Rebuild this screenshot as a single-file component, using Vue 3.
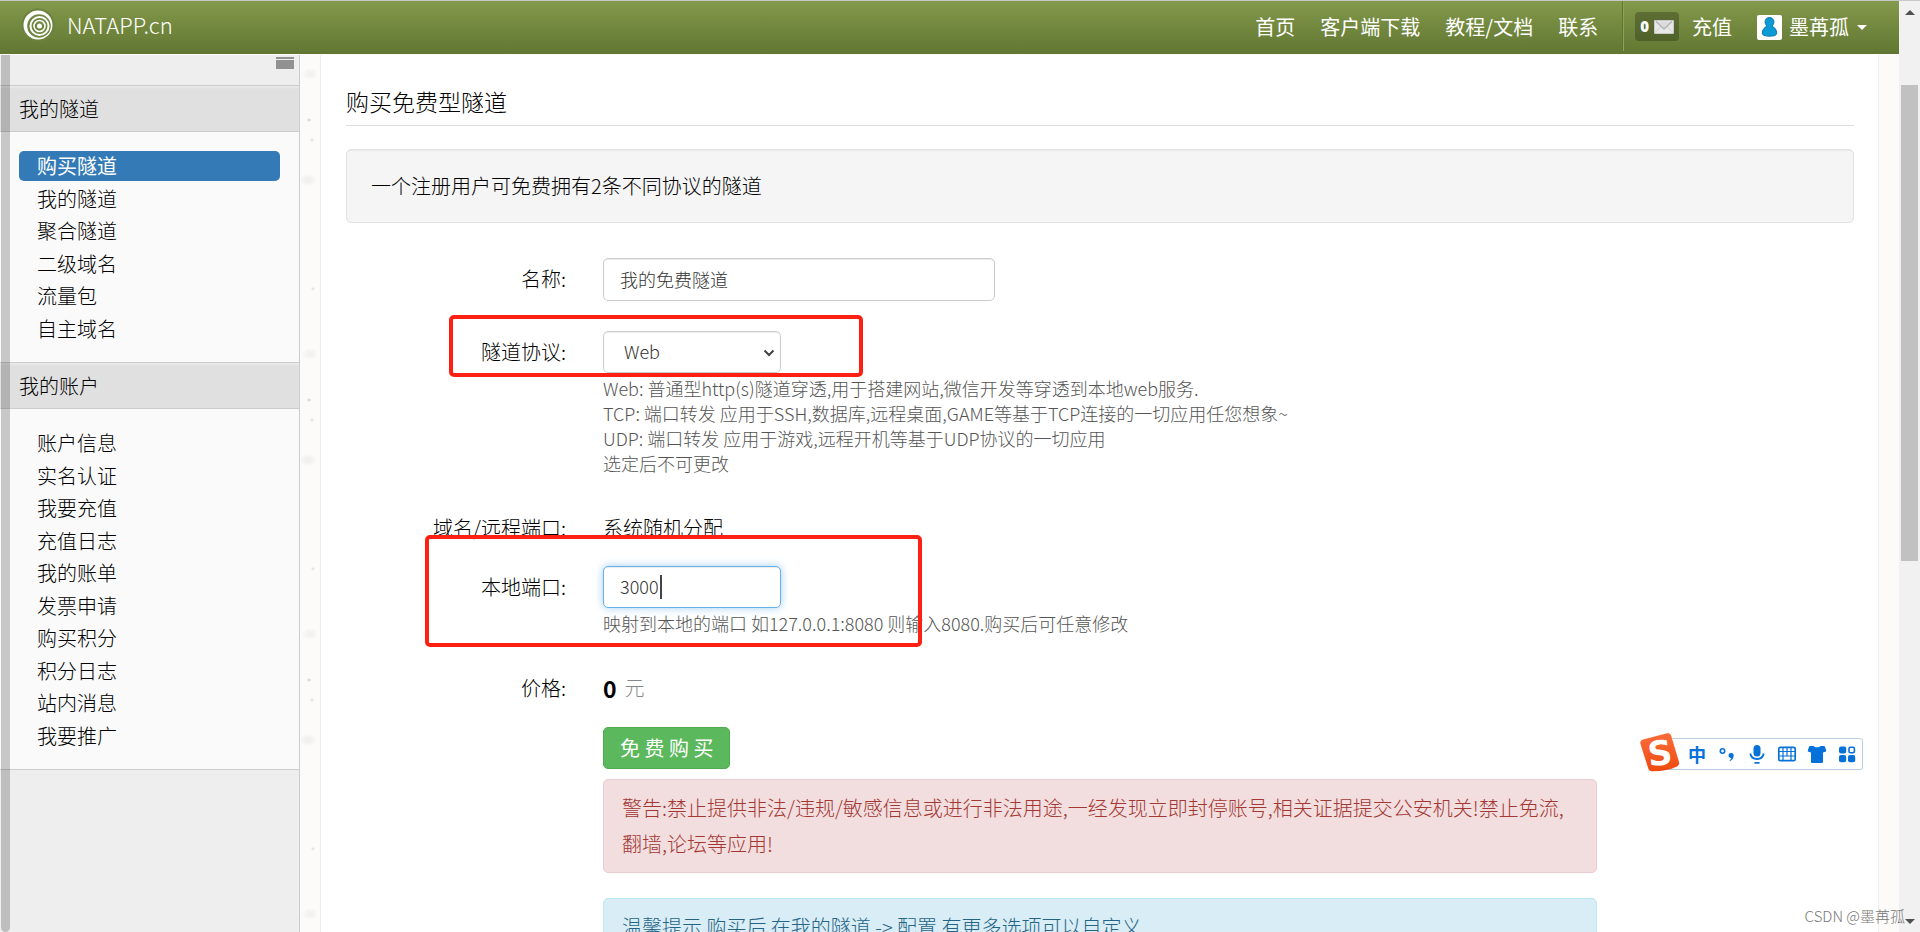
<script setup>
import { ref } from 'vue'

const navLinks = ['首页', '客户端下载', '教程/文档', '联系']
const groups = [
  { title: '我的隧道', items: ['购买隧道', '我的隧道', '聚合隧道', '二级域名', '流量包', '自主域名'] },
  {
    title: '我的账户',
    items: ['账户信息', '实名认证', '我要充值', '充值日志', '我的账单', '发票申请', '购买积分', '积分日志', '站内消息', '我要推广'],
  },
]
const active = '0-0'
const name = ref('我的免费隧道')
const protocol = ref('Web')
const port = ref('3000')
</script>

<template>
  <div class="window">
    <div class="page">
      <header class="topbar">
        <a class="brand" href="#">
          <svg width="34" height="34" viewBox="0 0 34 34" aria-hidden="true">
            <circle cx="17" cy="17" r="16.500" fill="#6c8340" />
            <circle cx="17" cy="17" r="14.500" fill="#fff" />
            <circle cx="18" cy="18" r="11.800" fill="#6f863f" />
            <circle cx="18.500" cy="18" r="9" fill="none" stroke="#fff" stroke-width="2" />
            <circle cx="18.500" cy="18" r="5.500" fill="none" stroke="#fff" stroke-width="1.600" />
            <circle cx="18.500" cy="18" r="2.500" fill="#fff" />
          </svg>
          <span>NATAPP.cn</span>
        </a>
        <nav class="nav">
          <a v-for="link in navLinks" :key="link" href="#">{{ link }}</a>
        </nav>
        <div class="account">
          <a class="mail" href="#" aria-label="站内消息">
            <b>0</b>
            <svg width="20" height="14" viewBox="0 0 20 14" aria-hidden="true">
              <rect width="20" height="14" rx="1" fill="#c9c9c9" />
              <rect x="1" y="1" width="18" height="12" fill="#e8e8e8" />
              <path d="M1 12.500 7.500 6M19 12.500 12.500 6" stroke="#cfcfcf" fill="none" />
              <path d="M2 1.500 10 9l8-7.500" stroke="#b5b5b5" stroke-width="1.400" fill="#dcdcdc" />
            </svg>
          </a>
          <a class="recharge" href="#">充值</a>
          <a class="user" href="#">
            <svg width="25" height="25" viewBox="0 0 25 25" aria-hidden="true">
              <rect width="25" height="25" rx="2" fill="#fff" />
              <path
                d="M12.500 2.500c2.600 0 4.400 1.900 4.400 4.500 0 1.800-.9 3.200-2 4.300 2.600.8 4.800 3.400 4.800 7 0 1.800-2.500 2.900-7.200 2.900s-7.200-1.100-7.200-2.900c0-3.600 2.200-6.200 4.800-7-1.100-1.100-2-2.500-2-4.300 0-2.600 1.800-4.500 4.400-4.500z"
                fill="#0c9bd6" stroke="#0a74a8" />
            </svg>
            <span>墨苒孤</span>
            <i class="caret"></i>
          </a>
        </div>
      </header>

      <div class="body">
        <aside class="sidebar">
          <div class="toggle-row">
            <button class="toggle" type="button" aria-label="折叠菜单"><i></i><i></i></button>
          </div>
          <section v-for="(group, g) in groups" :key="group.title">
            <h3>{{ group.title }}</h3>
            <ul>
              <li v-for="(item, n) in group.items" :key="item">
                <a href="#" :class="{ active: active === g + '-' + n }">{{ item }}</a>
              </li>
            </ul>
          </section>
          <div class="rail"></div>
        </aside>

        <main class="content">
          <h1>购买免费型隧道</h1>
          <div class="well">一个注册用户可免费拥有2条不同协议的隧道</div>

          <form class="form" @submit.prevent>
            <div class="row name-row">
              <label for="name">名称:</label>
              <div><input id="name" v-model="name" class="control wide" type="text" /></div>
            </div>

            <div class="row protocol-row">
              <label for="protocol">隧道协议:</label>
              <div>
                <div class="select-box">
                  <select id="protocol" v-model="protocol" class="control">
                    <option>Web</option>
                    <option>TCP</option>
                    <option>UDP</option>
                  </select>
                  <svg class="chevron" width="12" height="8" viewBox="0 0 12 8" aria-hidden="true">
                    <path d="M1.500 1.500 6 6l4.500-4.500" fill="none" stroke="#444" stroke-width="2" />
                  </svg>
                </div>
                <p class="help">
                  Web: 普通型http(s)隧道穿透,用于搭建网站,微信开发等穿透到本地web服务.<br />
                  TCP: 端口转发 应用于SSH,数据库,远程桌面,GAME等基于TCP连接的一切应用任您想象~<br />
                  UDP: 端口转发 应用于游戏,远程开机等基于UDP协议的一切应用<br />
                  选定后不可更改
                </p>
              </div>
              <div class="mark mark-protocol"></div>
            </div>

            <div class="row domain-row">
              <span class="label">域名/远程端口:</span>
              <div>系统随机分配</div>
            </div>

            <div class="row port-row">
              <label for="port">本地端口:</label>
              <div>
                <div class="port-box">
                  <input id="port" v-model="port" class="control focused" type="text" />
                  <i class="cursor"></i>
                </div>
                <p class="help">映射到本地的端口 如127.0.0.1:8080 则输入8080.购买后可任意修改</p>
              </div>
              <div class="mark mark-port"></div>
            </div>

            <div class="row price-row">
              <span class="label">价格:</span>
              <div class="price"><b>0</b> <span>元</span></div>
            </div>

            <div class="actions">
              <button class="buy" type="submit">免 费 购 买</button>
              <div class="alert danger">警告:禁止提供非法/违规/敏感信息或进行非法用途,一经发现立即封停账号,相关证据提交公安机关!禁止免流,翻墙,论坛等应用!</div>
              <div class="alert info">温馨提示 购买后 在我的隧道 -&gt; 配置 有更多选项可以自定义</div>
            </div>
          </form>
        </main>
      </div>
    </div>

    <div class="scrollbar">
      <i class="arrow up"></i>
      <div class="thumb"></div>
      <i class="arrow down"></i>
    </div>

    <div class="ime">
      <svg class="ime-logo" width="42" height="42" viewBox="0 0 42 42" aria-hidden="true">
        <defs>
          <linearGradient id="imeFill" x1="0" y1="0" x2="0" y2="1">
            <stop offset="0" stop-color="#fb6d3a" />
            <stop offset="1" stop-color="#ee4a10" />
          </linearGradient>
        </defs>
        <path d="M4 8.500 28 2.300q3-.7 4 2L40 31q.8 3-2 4.500Q28 40.500 13 40.300q-3 0-3.800-3L1.300 12.500Q.8 9.500 4 8.500z" fill="url(#imeFill)" />
        <text x="21" y="34" text-anchor="middle" transform="rotate(-6 21 22)">S</text>
      </svg>
      <button type="button" class="zh">中</button>
      <button type="button" aria-label="标点">
        <svg width="20" height="20" viewBox="0 0 20 20">
          <circle cx="5.500" cy="7" r="2.200" fill="none" stroke="#0671d8" stroke-width="1.600" />
          <path d="M14 9a2.500 2.500 0 0 1 2.600 2.700c0 2.400-1.400 4.400-3.600 5.300l-.5-.8c1-.6 1.700-1.300 1.800-2.200-1.600.1-2.800-1-2.800-2.500S12.500 9 14 9z" fill="#0671d8" />
        </svg>
      </button>
      <button type="button" aria-label="语音">
        <svg width="20" height="20" viewBox="0 0 20 20">
          <rect x="6.500" y="1" width="7" height="11.500" rx="3.500" fill="#0671d8" />
          <path d="M3.300 9.500c.6 3.800 3.200 5.500 6.700 5.500s6.100-1.700 6.700-5.500M7.500 18.800h5" fill="none" stroke="#0671d8" stroke-width="1.800" />
        </svg>
      </button>
      <button type="button" aria-label="键盘">
        <svg width="20" height="20" viewBox="0 0 20 20">
          <rect x="1.800" y="3.300" width="16.400" height="13.400" rx="1.500" fill="none" stroke="#0671d8" stroke-width="1.700" />
          <path d="M2 7.500h16M2 12h16M6 4v13M10 4v8M14 4v13" stroke="#0671d8" stroke-width="1.200" />
        </svg>
      </button>
      <button type="button" aria-label="皮肤">
        <svg width="20" height="20" viewBox="0 0 20 20">
          <path d="M6.500 2c1 1.800 6 1.800 7 0h3.300q.8 0 1.200.8l1.200 3.700q.2 1-.7 1.300L16 8.500V18q0 1-1 1H5q-1 0-1-1V8.500L1.500 7.800q-.9-.3-.7-1.300L2 2.800Q2.400 2 3.200 2z" fill="#0671d8" />
        </svg>
      </button>
      <button type="button" aria-label="工具">
        <svg width="20" height="20" viewBox="0 0 20 20">
          <g fill="#0671d8">
            <rect x="2" y="2.500" width="7.200" height="7" rx="2" />
            <rect x="2" y="11" width="7.200" height="7.200" rx="2" />
            <rect x="11" y="11" width="7.200" height="7.200" rx="2" />
          </g>
          <rect x="12" y="3.300" width="5.400" height="5.400" rx="1.500" fill="none" stroke="#0671d8" stroke-width="1.600" />
        </svg>
      </button>
    </div>

    <div class="watermark">CSDN @墨苒孤</div>
  </div>
</template>

<style>
html,
body {
  margin: 0;
  overflow: hidden;
}
</style>

<style scoped>
* {
  box-sizing: border-box;
}
.window {
  position: relative;
  display: flex;
  height: 100vh;
  overflow: hidden;
  font-family: "Noto Sans CJK SC", "Open Sans", sans-serif;
  font-weight: 300;
  font-size: 20px;
  line-height: 30px;
  color: #000;
  /* speckled paper */
  background-color: #fcfbfa;
  background-image:
    radial-gradient(circle at 9px 120px, #d9d9d7 0 1px, transparent 2px),
    radial-gradient(circle at 12px 140px, #e4e4e2 0 1px, transparent 2px),
    radial-gradient(ellipse at 8px 180px, #f1f0ee 0 3px, transparent 9px),
    radial-gradient(circle at 13px 9px, #e6e6e4 0 1px, transparent 2px),
    radial-gradient(ellipse at 10px 74px, #f3f2f0 0 3px, transparent 8px);
  background-size: 280px 280px;
  background-position: 300px 0;
}
a {
  color: inherit;
  text-decoration: none;
}
.page {
  flex: 1;
  min-width: 0;
  display: flex;
  flex-direction: column;
}
.topbar {
  flex: none;
  display: flex;
  align-items: stretch;
  height: 54px;
  border-top: 1px solid #c8c8c8;
  background: linear-gradient(#83994b, #617631);
  color: #fff;
  font-weight: 400;
}
.brand {
  display: flex;
  gap: 12px;
  padding: 7px 0 0 21px;
  margin-right: auto;
  font-size: 22px;
  font-weight: 300;
  line-height: 32px;
}
.nav {
  display: flex;
  gap: 25px;
  padding: 11px 24px 0 0;
}
.account {
  display: flex;
  align-items: flex-start;
  padding: 11px 32px 0 13px;
  position: relative;
}
.account::before {
  content: "";
  position: absolute;
  left: 0;
  top: 0;
  width: 2px;
  height: 50px;
  background: linear-gradient(90deg, #5f7530 50%, #8ba356 50%);
}
.mail {
  display: flex;
  align-items: center;
  gap: 5px;
  height: 29px;
  padding: 0 5px;
  border-radius: 4px;
  background: rgba(0, 0, 0, 0.24);
  font: 700 15px/29px "Open Sans", sans-serif;
}
.recharge {
  margin-left: 13px;
}
.user {
  display: flex;
  align-items: center;
  gap: 7px;
  margin-left: 25px;
}
.caret {
  margin-left: 1px;
  border: 5px solid transparent;
  border-top-color: #fff;
  border-bottom: 0;
}
.body {
  flex: 1;
  min-height: 0;
  display: flex;
  padding-top: 1px;
}
.sidebar {
  position: relative;
  flex: none;
  width: 300px;
  background: #eee;
  border-right: 1px solid #ccc;
  overflow: hidden;
}
.toggle-row {
  display: flex;
  justify-content: flex-end;
  height: 30px;
  padding: 2px 5px;
}
.toggle {
  display: flex;
  flex-direction: column;
  gap: 1px;
  width: 18px;
  padding: 0;
  border: 0;
  background: none;
}
.toggle i {
  height: 2px;
  background: #919191;
}
.toggle i + i {
  height: 9px;
}
.sidebar h3 {
  margin: 0;
  padding: 8px 19px 7px;
  border: solid #ccc;
  border-width: 1px 0;
  background: #e0e0e0;
  box-shadow: inset 0 2px 2px #e9e9e9;
  font-size: 20px;
  font-weight: 300;
  line-height: 30px;
}
.sidebar ul {
  list-style: none;
  margin: 0;
  padding: 19px 19px 16px;
  background: #fafafa;
}
.sidebar section:last-of-type {
  border-bottom: 1px solid #ccc;
}
.sidebar li {
  margin-bottom: 3px;
}
.sidebar li:nth-child(even) {
  margin-bottom: 2px;
}
.sidebar li a {
  display: block;
  padding: 0 18px;
  border-radius: 5px;
}
.sidebar li a.active {
  color: #fff;
  font-weight: 400;
  background: #337ab7;
}
.rail {
  position: absolute;
  inset: 0 auto 0 1px;
  width: 9px;
  border-radius: 0 0 5px 5px;
  background: rgba(0, 0, 0, 0.2);
}
.content {
  flex: 1;
  min-width: 0;
  margin: 0 20px;
  padding: 30px 24px 0 25px;
  border: solid #eee;
  border-width: 0 1px;
  background: #fff;
}
h1 {
  margin: 0 0 23px;
  padding-bottom: 8px;
  border-bottom: 1px solid #ddd;
  font-size: 23px;
  font-weight: 300;
  line-height: 32px;
}
.well {
  padding: 21px 24px;
  border: 1px solid #e3e3e3;
  border-radius: 5px;
  background: #f5f5f5;
  box-shadow: inset 0 1px 1px rgba(0, 0, 0, 0.05);
}
.form {
  display: flex;
  flex-direction: column;
  padding-top: 35px;
}
.row {
  position: relative;
  display: grid;
  grid-template-columns: 220px 1fr;
  column-gap: 37px;
}
.row > label,
.row > .label {
  text-align: right;
}
.row > label {
  padding-top: 6px;
}
.name-row {
  margin-bottom: 30px;
}
.protocol-row {
  margin-bottom: 37px;
}
.domain-row {
  margin-bottom: 23px;
}
.port-row {
  margin-bottom: 34px;
}
.price-row {
  margin-bottom: 21px;
  line-height: 36px;
}
.control {
  display: block;
  width: 100%;
  height: 42px;
  margin: 0;
  padding: 0 16px 2px;
  border: 1px solid #ccc;
  border-radius: 5px;
  background: #fff;
  box-shadow: inset 0 1px 1px rgba(0, 0, 0, 0.08);
  font: inherit;
  font-size: 18px;
  line-height: 30px;
  color: #333;
  outline: none;
}
.wide {
  width: 392px;
  height: 43px;
}
.select-box,
.port-box {
  position: relative;
  width: 178px;
}
select.control {
  appearance: none;
  padding-left: 20px;
}
.chevron {
  position: absolute;
  right: 6px;
  top: 18px;
  pointer-events: none;
}
.focused {
  border-color: #66afe9;
  box-shadow: inset 0 1px 1px rgba(0, 0, 0, 0.08), 0 0 8px rgba(102, 175, 233, 0.6);
}
.cursor {
  position: absolute;
  left: 57px;
  top: 9px;
  width: 2px;
  height: 24px;
  background: #444;
}
.help {
  margin: 3px 0 0;
  font-size: 18px;
  line-height: 25px;
  color: #555;
}
.mark {
  position: absolute;
  border: 4px solid #ff2014;
  border-radius: 5px;
  pointer-events: none;
}
.mark-protocol {
  left: 103px;
  top: -16px;
  width: 414px;
  height: 62px;
}
.mark-port {
  left: 79px;
  top: -31px;
  width: 497px;
  height: 112px;
}
.price {
  display: flex;
  gap: 8px;
}
.price b {
  font: 700 23px/36px "Noto Sans CJK SC", sans-serif;
  color: #000;
}
.price span {
  color: #888;
}
.actions {
  margin: 0 257px;
}
.buy {
  display: block;
  height: 42px;
  margin-bottom: 10px;
  padding: 0 16px;
  border: 1px solid #4cae4c;
  border-radius: 5px;
  background: #5cb85c;
  color: #fff;
  font: inherit;
  font-weight: 400;
  font-size: 20px;
}
.alert {
  margin-bottom: 25px;
  padding: 10px 18px;
  border: 1px solid;
  border-radius: 5px;
  line-height: 36px;
}
.danger {
  border-color: #ebccd1;
  background: #f2dede;
  color: #a23734;
}
.info {
  border-color: #bce8f1;
  background: #d9edf7;
  color: #246484;
}
.scrollbar {
  flex: none;
  display: flex;
  flex-direction: column;
  align-items: center;
  width: 21px;
  padding: 9px 0 8px;
  border-top: 1px solid #c8c8c8;
  background: #f1f1f1;
}
.thumb {
  width: 17px;
  height: 476px;
  margin-top: 70px;
  background: #c1c1c1;
}
.arrow {
  border: 5px solid transparent;
}
.arrow.up {
  border-top: 0;
  border-bottom-color: #505050;
}
.arrow.down {
  margin-top: auto;
  border-bottom: 0;
  border-top-color: #505050;
}
.ime {
  position: absolute;
  right: 57px;
  bottom: 162px;
  display: flex;
  align-items: center;
  gap: 10px;
  height: 32px;
  padding: 0 5px 0 27px;
  border: 1px solid #b9cde2;
  border-radius: 3px;
  background: #fff;
}
.ime-logo {
  position: absolute;
  left: -21px;
  top: -8px;
}
.ime-logo text {
  font: 700 34px "DejaVu Sans", sans-serif;
  fill: #fff;
}
.ime button {
  display: flex;
  width: 20px;
  height: 20px;
  padding: 0;
  border: 0;
  background: none;
}
.ime .zh {
  justify-content: center;
  font: 700 18px/20px "Noto Sans CJK SC", sans-serif;
  color: #0671d8;
}
.watermark {
  position: absolute;
  right: 15px;
  bottom: 5px;
  font-size: 15px;
  line-height: 22px;
  color: #777;
}
</style>
